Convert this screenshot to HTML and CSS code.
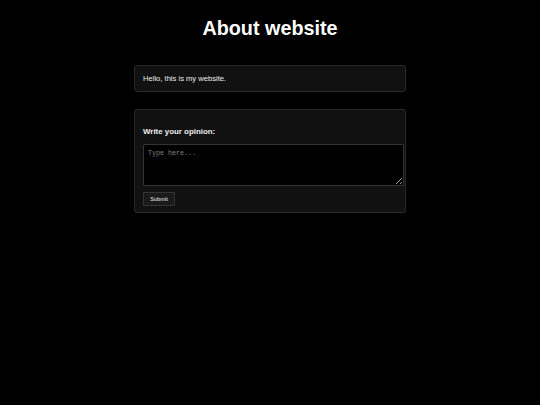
FILE: index.html
```html
<!DOCTYPE html>
<html>
<head>
<meta charset="utf-8">
<link rel="stylesheet" href="styles.css">
</head>
<body>
<main class="page">
  <h1 class="title">About website</h1>
  <section class="card intro">
    <p class="intro-text">Hello, this is my website.</p>
  </section>
  <section class="card form-card">
    <label class="label" for="op">Write your opinion:</label>
    <textarea id="op" class="input" placeholder="Type here..."></textarea>
    <button class="btn">Submit</button>
  </section>
</main>
</body>
</html>
```
FILE: styles.css
```css
html, body {
  margin: 0;
  padding: 0;
  background: #000;
  height: 100%;
}
.page {
  display: flex;
  flex-direction: column;
  align-items: center;
  font-family: "Liberation Sans", Arial, sans-serif;
  color: #fff;
  padding-top: 15px;
}
.title {
  margin: 0;
  font-size: 19.8px;
  font-weight: bold;
  line-height: 26px;
  height: 26px;
}
.card {
  box-sizing: border-box;
  width: 272px;
  background: #111;
  border: 1px solid #2a2a2a;
  border-radius: 3px;
}
.intro {
  margin-top: 24px;
  height: 27px;
  padding: 0 8px;
  display: flex;
  align-items: center;
}
.intro-text {
  margin: 0;
  font-size: 7.6px;
  color: #eee;
}
.form-card {
  margin-top: 17px;
  height: 104px;
  padding: 17px 8px 0;
  display: flex;
  flex-direction: column;
  align-items: flex-start;
}
.label {
  font-size: 7.9px;
  font-weight: bold;
  line-height: 10px;
  color: #eee;
}
.input {
  box-sizing: border-box;
  margin-top: 7px;
  width: 261px;
  height: 42px;
  background: #000;
  border: 1px solid #333;
  border-radius: 1px;
  color: #ccc;
  font-family: "Liberation Mono", monospace;
  font-size: 6.7px;
  padding: 4px 4px;
  resize: vertical;
}
.input::placeholder {
  color: #808080;
}
.btn {
  margin-top: 6px;
  box-sizing: border-box;
  width: 32px;
  height: 14px;
  background: #1a1a1a;
  border: 1px solid #333;
  color: #eee;
  font-family: "Liberation Sans", Arial, sans-serif;
  font-size: 5.6px;
  padding: 0;
}
```
